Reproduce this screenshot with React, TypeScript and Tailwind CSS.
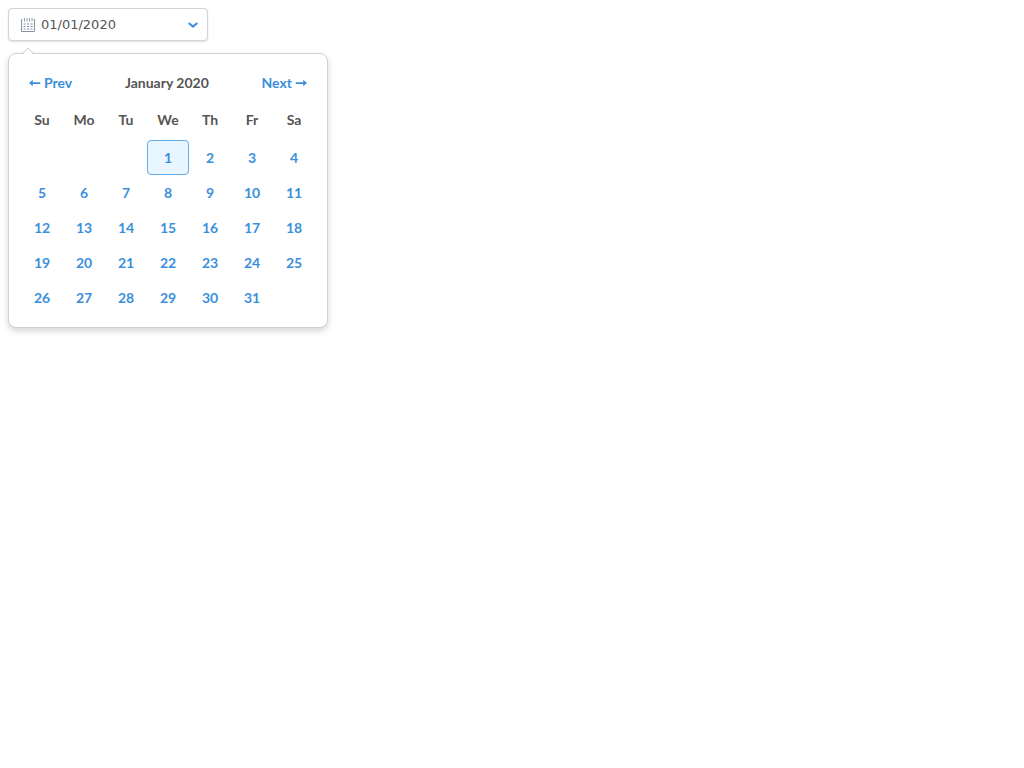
import { useState } from 'react';

const weekdays = ['Su', 'Mo', 'Tu', 'We', 'Th', 'Fr', 'Sa'];

const weeks: (number | null)[][] = [
  [null, null, null, 1, 2, 3, 4],
  [5, 6, 7, 8, 9, 10, 11],
  [12, 13, 14, 15, 16, 17, 18],
  [19, 20, 21, 22, 23, 24, 25],
  [26, 27, 28, 29, 30, 31, null],
];

function CalendarIcon() {
  return (
    <svg width="14" height="14" viewBox="0 0 14 14" fill="none" stroke="#8492a6" aria-hidden="true">
      <path d="M1.5 1.5H.5v12h13v-12h-1" />
      <path d="M3.5 0v3.5M6 0v3.5M8.5 0v3.5M11 0v3.5" strokeWidth=".9" />
      <path d="M2.5 6h9.5M2.5 8.500h9.5M2.5 11h9.5" strokeDasharray="2.2 1.3" strokeWidth="1.2" />
    </svg>
  );
}

function ArrowLeft() {
  return (
    <svg width="12" height="8" viewBox="0 0 12 8" fill="currentColor" aria-hidden="true">
      <path d="M0 4 3.8 .8V3.2H11.3V4.9H3.8V7.2Z" />
    </svg>
  );
}

function ArrowRight() {
  return (
    <svg width="12" height="8" viewBox="0 0 12 8" fill="currentColor" aria-hidden="true">
      <path d="M12 4 8.2 .8V3.2H.7V4.9H8.2V7.2Z" />
    </svg>
  );
}

export default function App() {
  const [selected, setSelected] = useState(1);
  const [value, setValue] = useState('01/01/2020');

  const pick = (day: number) => {
    setSelected(day);
    setValue(`01/${String(day).padStart(2, '0')}/2020`);
  };

  return (
    <main className="flex flex-col items-start gap-3 p-2 font-['Lato',sans-serif] text-sm text-[#555555]">
      <div className="flex h-[33px] w-full max-w-[200px] items-center gap-1.5 rounded border border-[#cfd3da] bg-white pr-1.5 pl-3 shadow-[0_1px_2px_rgba(0,0,0,0.12)]">
        <CalendarIcon />
        <input
          aria-label="Date"
          value={value}
          onChange={(e) => setValue(e.target.value)}
          className="min-w-0 flex-1 bg-transparent pt-0.5 font-['DejaVu_Sans',sans-serif] text-[13px] text-[#555555] outline-none"
        />
        <button type="button" aria-label="Toggle calendar" className="flex size-4 items-center justify-center">
          <svg width="10" height="6" viewBox="0 0 10 6" fill="none" stroke="#3b8fdb" strokeWidth="2" aria-hidden="true">
            <path d="M.7.9 5 4.6 9.3.9" />
          </svg>
        </button>
      </div>

      <section
        aria-label="Choose a date"
        className="relative w-full max-w-[320px] rounded-lg border border-[#cdd0d6] bg-white px-3 pt-[18px] pb-3 font-bold shadow-[0_3px_6px_rgba(0,0,0,0.16)]"
      >
        <svg className="absolute -top-[7px] left-3" width="14" height="8" viewBox="0 0 14 8" aria-hidden="true">
          <path d="M1.5 8 7 1.5 12.5 8Z" fill="#fff" />
          <path d="M0 6.5h1.5L7 1.2l5.5 5.3H14" fill="none" stroke="#cdd0d6" />
        </svg>
        <header className="flex items-center justify-between px-2 leading-[22px]">
          <button type="button" className="flex items-center gap-[3px] text-[#3b8fdb]"><ArrowLeft />Prev</button>
          <h2>January 2020</h2>
          <button type="button" className="flex items-center gap-[3px] text-[#3b8fdb]">Next<ArrowRight /></button>
        </header>
        <table className="mt-2 w-full table-fixed border-separate border-spacing-0 text-center">
          <thead>
            <tr>
              {weekdays.map((day) => (
                <th key={day} scope="col" className="h-[38px] p-0 pb-0.5">{day}</th>
              ))}
            </tr>
          </thead>
          <tbody>
            {weeks.map((week, i) => (
              <tr key={i}>
                {week.map((day, j) => (
                  <td key={j} className="h-[35px] p-0">
                    {day !== null && (
                      <button
                        type="button"
                        onClick={() => pick(day)}
                        aria-pressed={day === selected}
                        className={
                          day === selected
                            ? 'block h-[35px] w-full rounded border border-[#62ace9] bg-[#eaf6ff] text-[#3b8fdb]'
                            : 'block h-[35px] w-full rounded border border-transparent text-[#3b8fdb]'
                        }
                      >
                        {day}
                      </button>
                    )}
                  </td>
                ))}
              </tr>
            ))}
          </tbody>
        </table>
      </section>
    </main>
  );
}
